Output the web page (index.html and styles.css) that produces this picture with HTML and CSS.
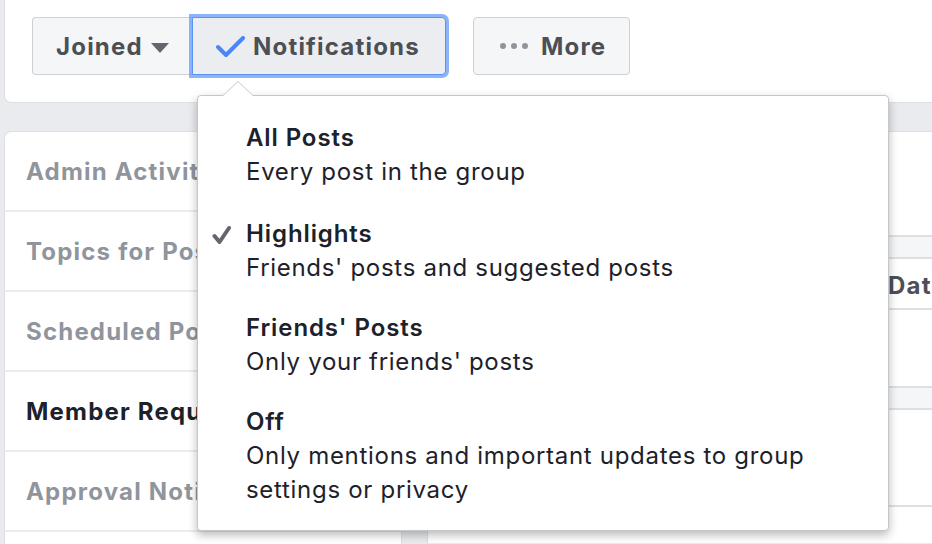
FILE: index.html
```html
<!DOCTYPE html>
<html>
<head>
<meta charset="utf-8">
<link rel="stylesheet" href="styles.css">
</head>
<body>
<div class="page">
  <div class="topcard">
    <div class="actions">
      <div class="group">
        <button class="btn btn-left">Joined <span class="caret"></span></button>
        <div class="notif-wrap">
          <button class="btn btn-right btn-focus">
            <svg class="bluecheck" width="30" height="22" viewBox="0 0 30 22"><polyline points="2,11 10,19 27,2" fill="none" stroke="#4a86f7" stroke-width="4" stroke-linecap="round" stroke-linejoin="round"/></svg>
            Notifications
          </button>
          <div class="menu">
            <div class="arrow"></div>
            <div class="item first">
              <div class="title">All Posts</div>
              <div class="sub">Every post in the group</div>
            </div>
            <div class="item">
              <svg class="tick" width="20" height="22" viewBox="0 0 20 22"><polyline points="2.5,11 7.5,17 17,3" fill="none" stroke="#62666d" stroke-width="4" stroke-linecap="round" stroke-linejoin="round"/></svg>
              <div class="title">Highlights</div>
              <div class="sub">Friends' posts and suggested posts</div>
            </div>
            <div class="item">
              <div class="title">Friends' Posts</div>
              <div class="sub">Only your friends' posts</div>
            </div>
            <div class="item">
              <div class="title">Off</div>
              <div class="sub">Only mentions and important updates to group settings or privacy</div>
            </div>
          </div>
        </div>
      </div>
      <button class="btn btn-more"><span class="dots"><i></i><i></i><i></i></span> More</button>
    </div>
  </div>
  <div class="main">
    <div class="sidebar">
      <div class="row">Admin Activity</div>
      <div class="row">Topics for Posts</div>
      <div class="row">Scheduled Posts</div>
      <div class="row active">Member Requests</div>
      <div class="row">Approval Notifications</div>
      <div class="row">Member Reports</div>
    </div>
    <div class="content">
      <div class="table">
        <div class="band"></div>
        <div class="thead"><span class="th">Name</span><span class="th">Date</span></div>
        <div class="trow"></div>
        <div class="band"></div>
        <div class="trow tall"></div>
      </div>
    </div>
  </div>
</div>
</body>
</html>
```
FILE: styles.css
```css
* { box-sizing: border-box; }
html, body { margin: 0; padding: 0; }
body {
  background: #e9ebee;
  font-family: Inter, "Noto Sans", sans-serif;
  overflow: hidden;
  width: 932px;
  height: 544px;
}
.page { padding-left: 4px; }
.topcard {
  background: #fff;
  border: 1px solid #dddfe2;
  border-top: none;
  border-right: none;
  border-radius: 0 0 0 7px;
  height: 103px;
  padding: 17px 0 0 27px;
}
.actions { display: flex; align-items: flex-start; }
.group { display: flex; }
.btn {
  font-family: inherit;
  font-size: 24px;
  font-weight: 700;
  letter-spacing: 1.2px;
  color: #4b4f56;
  background: #f5f6f7;
  border: 1px solid #ced0d4;
  border-radius: 4px;
  height: 58px;
  display: flex;
  align-items: center;
  padding: 0;
  margin: 0;
  white-space: nowrap;
}
.btn-left { padding: 0 0 0 23px; border-radius: 4px 0 0 4px; border-right: none; width: 160px; }
.caret {
  display: inline-block;
  width: 0; height: 0;
  border-left: 9.5px solid transparent;
  border-right: 9.5px solid transparent;
  border-top: 10px solid #606770;
  margin-left: 8px;
  margin-top: 3px;
}
.notif-wrap { position: relative; }
.btn-right { border-radius: 0 4px 4px 0; padding: 0 0 0 23px; width: 254px; }
.btn-focus {
  background: #ebedf0;
  border-color: #5a92f6;
  box-shadow: 0 0 0 3px rgba(100, 155, 250, 0.75);
}
.bluecheck { margin-right: 7px; margin-top: 2px; flex: none; }
.btn-more { margin-left: 27px; padding: 0 0 0 26px; width: 157px; }
.dots { display: flex; gap: 5px; margin-right: 13px; }
.dots i { display: block; width: 6px; height: 6px; border-radius: 50%; background: #90949c; }

.menu {
  position: absolute;
  left: 5px;
  top: 78px;
  width: 692px;
  background: #fff;
  border: 1px solid #c4c7cc;
  border-radius: 4px;
  box-shadow: 0 4px 10px rgba(0, 0, 0, 0.28);
  padding: 11px 0 10px 0;
  z-index: 10;
}
.arrow {
  position: absolute;
  left: 24px;
  top: -15px;
  width: 0; height: 0;
  border-left: 16px solid transparent;
  border-right: 16px solid transparent;
  border-bottom: 15px solid #c4c7cc;
}
.arrow::after {
  content: "";
  position: absolute;
  left: -15px;
  top: 1px;
  border-left: 15px solid transparent;
  border-right: 15px solid transparent;
  border-bottom: 14px solid #fff;
}
.item {
  position: relative;
  padding: 13px 40px 13px 48px;
  line-height: 34px;
  font-size: 24px;
  color: #1d2129;
}
.item.first { padding-top: 14px; padding-bottom: 15px; }
.title { font-weight: 600; letter-spacing: 0.9px; }
.sub { font-weight: 400; color: #1d2129; letter-spacing: 0.7px; }
.tick { position: absolute; left: 14px; top: 21px; }

.main { display: flex; margin-top: 28px; gap: 25px; }
.sidebar {
  width: 398px;
  flex: none;
  background: #fff;
  border: 1px solid #dddfe2;
  border-bottom: none;
  border-radius: 7px 0 0 0;
}
.row {
  height: 80px;
  border-bottom: 2px solid #e9ebee;
  display: flex;
  align-items: center;
  padding-left: 21px;
  font-size: 24px;
  font-weight: 700;
  letter-spacing: 1.2px;
  color: #90949c;
  white-space: nowrap;
  overflow: hidden;
}
.row.active { color: #1d2129; }
.content {
  flex: 1;
  background: #fff;
  border-left: 1px solid #dddfe2;
  border-top: 1px solid #dddfe2;
  border-radius: 4px 0 0 0;
  padding-top: 103px;
  height: 412px;
}
.band {
  height: 24px;
  background: #f5f6f7;
  border-top: 2px solid #dddfe2;
  border-bottom: 2px solid #dddfe2;
}
.thead {
  height: 51px;
  display: flex;
  align-items: center;
  border-bottom: 2px solid #dddfe2;
  font-size: 24px;
  font-weight: 700;
  letter-spacing: 1.2px;
  color: #4b4f56;
  padding-top: 3px;
}
.th:first-child { width: 460px; padding-left: 20px; }
.trow { height: 76px; }
.trow.tall { height: 97px; border-bottom: 2px solid #dddfe2; }
```
